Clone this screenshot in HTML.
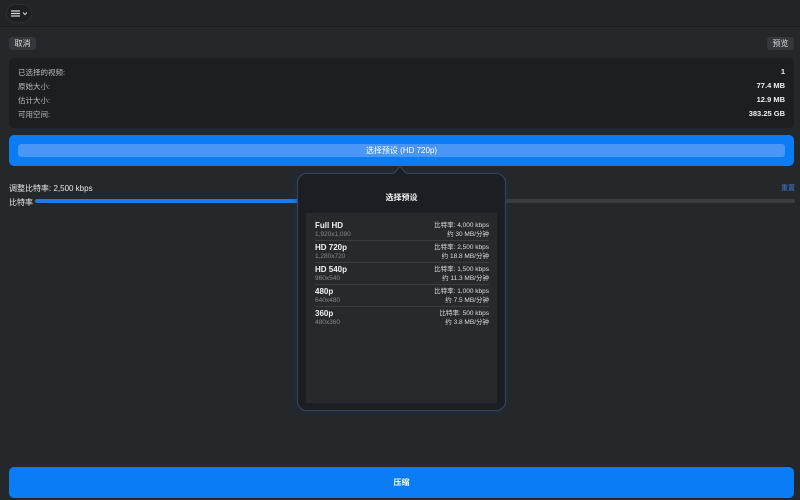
<!DOCTYPE html><html><head><meta charset="utf-8"><style>
*{margin:0;padding:0;box-sizing:border-box}
body{width:800px;height:500px;background:#25282b;font-family:"Liberation Sans","Noto Sans CJK SC",sans-serif;color:#e6e6e6;position:relative;overflow:hidden;font-size:8px}
.abs{position:absolute}
.top{left:0;top:0;width:800px;height:27px;background:#222427;border-bottom:1px solid #1a1c1e}
.menu{left:6px;top:4px;width:26px;height:19px;border-radius:10px;background:#1c1e21;border:1px solid #2c2f33}
.btn{background:#34373b;border-radius:3px;color:#ddd;font-size:8px;text-align:center;line-height:13px;height:13px}
.info{left:9px;top:58px;width:785px;height:70px;background:#1c1e20;border-radius:5px}
.row{position:absolute;left:9px;right:9px;font-size:7.5px;color:#bbb}
.row b{position:absolute;right:0;color:#eee;font-weight:bold}
.sel{left:9px;top:135px;width:785px;height:31px;background:#0a7cf5;border-radius:5px}
.sel div{position:absolute;left:9px;right:9px;top:9px;height:13px;background:#4a96f6;border-radius:3px;text-align:center;line-height:13px;color:#fff;font-size:8px}
.pop{left:297px;top:173px;width:209px;height:238px;background:#1b1e22;border:1px solid #3a4658;border-radius:10px;box-shadow:0 0 6px rgba(10,60,140,.4)}
.list{left:8px;top:39px;width:191px;height:190px;background:#27292c}
.it{position:absolute;left:9px;right:8px;height:22px;border-bottom:1px solid #3a3c40}
.it .n{position:absolute;left:0;top:2px;font-weight:bold;font-size:8px;color:#f2f2f2}
.it .s{position:absolute;left:0;top:12px;font-size:6.5px;color:#888}
.it .r{position:absolute;right:0;top:2px;font-size:6.5px;color:#ddd;text-align:right;line-height:9px}
</style></head><body>
<div class="abs top"></div>
<div class="abs menu"><svg width="24" height="17"><g stroke="#ddd" stroke-width="1.2"><line x1="4" y1="6" x2="13" y2="6"/><line x1="4" y1="8.5" x2="13" y2="8.5"/><line x1="4" y1="11" x2="13" y2="11"/></g><path d="M16 7.5l2 2 2-2" stroke="#ddd" fill="none" stroke-width="1"/></svg></div>
<div class="abs btn" style="left:9px;top:37px;width:27px">取消</div>
<div class="abs btn" style="left:767px;top:37px;width:27px">预览</div>
<div class="abs info">
<div class="row" style="top:9px">已选择的视频:<b>1</b></div>
<div class="row" style="top:23px">原始大小:<b>77.4 MB</b></div>
<div class="row" style="top:37px">估计大小:<b>12.9 MB</b></div>
<div class="row" style="top:51px">可用空间:<b>383.25 GB</b></div>
</div>
<div class="abs sel"><div>选择预设 (HD 720p)</div></div>
<div class="abs" style="left:9px;top:183px;font-size:8px">调整比特率: 2,500 kbps</div>
<div class="abs" style="left:781px;top:183px;font-size:7px;color:#3d7fd0">重置</div>
<div class="abs" style="left:9px;top:197px;font-size:8px">比特率</div>
<div class="abs" style="left:35px;top:199px;width:760px;height:4px;background:#3a3d41;border-radius:2px"></div>
<div class="abs" style="left:35px;top:199px;width:365px;height:4px;background:#1f7ae8;border-radius:2px"></div>
<div class="abs pop">
<div class="abs" style="left:0;right:0;top:18px;text-align:center;font-weight:bold;font-size:8px;color:#eee">选择预设</div>
<div class="abs list">
<div class="it" style="top:6px"><div class="n">Full HD</div><div class="s">1,920x1,080</div><div class="r">比特率: 4,000 kbps<br>约 30 MB/分钟</div></div>
<div class="it" style="top:28px"><div class="n">HD 720p</div><div class="s">1,280x720</div><div class="r">比特率: 2,500 kbps<br>约 18.8 MB/分钟</div></div>
<div class="it" style="top:50px"><div class="n">HD 540p</div><div class="s">960x540</div><div class="r">比特率: 1,500 kbps<br>约 11.3 MB/分钟</div></div>
<div class="it" style="top:72px"><div class="n">480p</div><div class="s">640x480</div><div class="r">比特率: 1,000 kbps<br>约 7.5 MB/分钟</div></div>
<div class="it" style="top:94px;border:none"><div class="n">360p</div><div class="s">480x360</div><div class="r">比特率: 500 kbps<br>约 3.8 MB/分钟</div></div>
</div>
</div>
<svg class="abs" style="left:388px;top:165px" width="24" height="10"><path d="M0 9.5 Q6 9.5 9 5 L12 1 L15 5 Q18 9.5 24 9.5" fill="#1b1e22" stroke="#3a4658" stroke-width="1"/><rect x="0" y="9" width="24" height="2" fill="#1b1e22"/></svg>
<div class="abs" style="left:9px;top:467px;width:785px;height:31px;background:#0a7cf5;border-radius:5px;text-align:center;line-height:31px;color:#fff;font-size:8px;font-weight:bold">压缩</div>
</body></html>
